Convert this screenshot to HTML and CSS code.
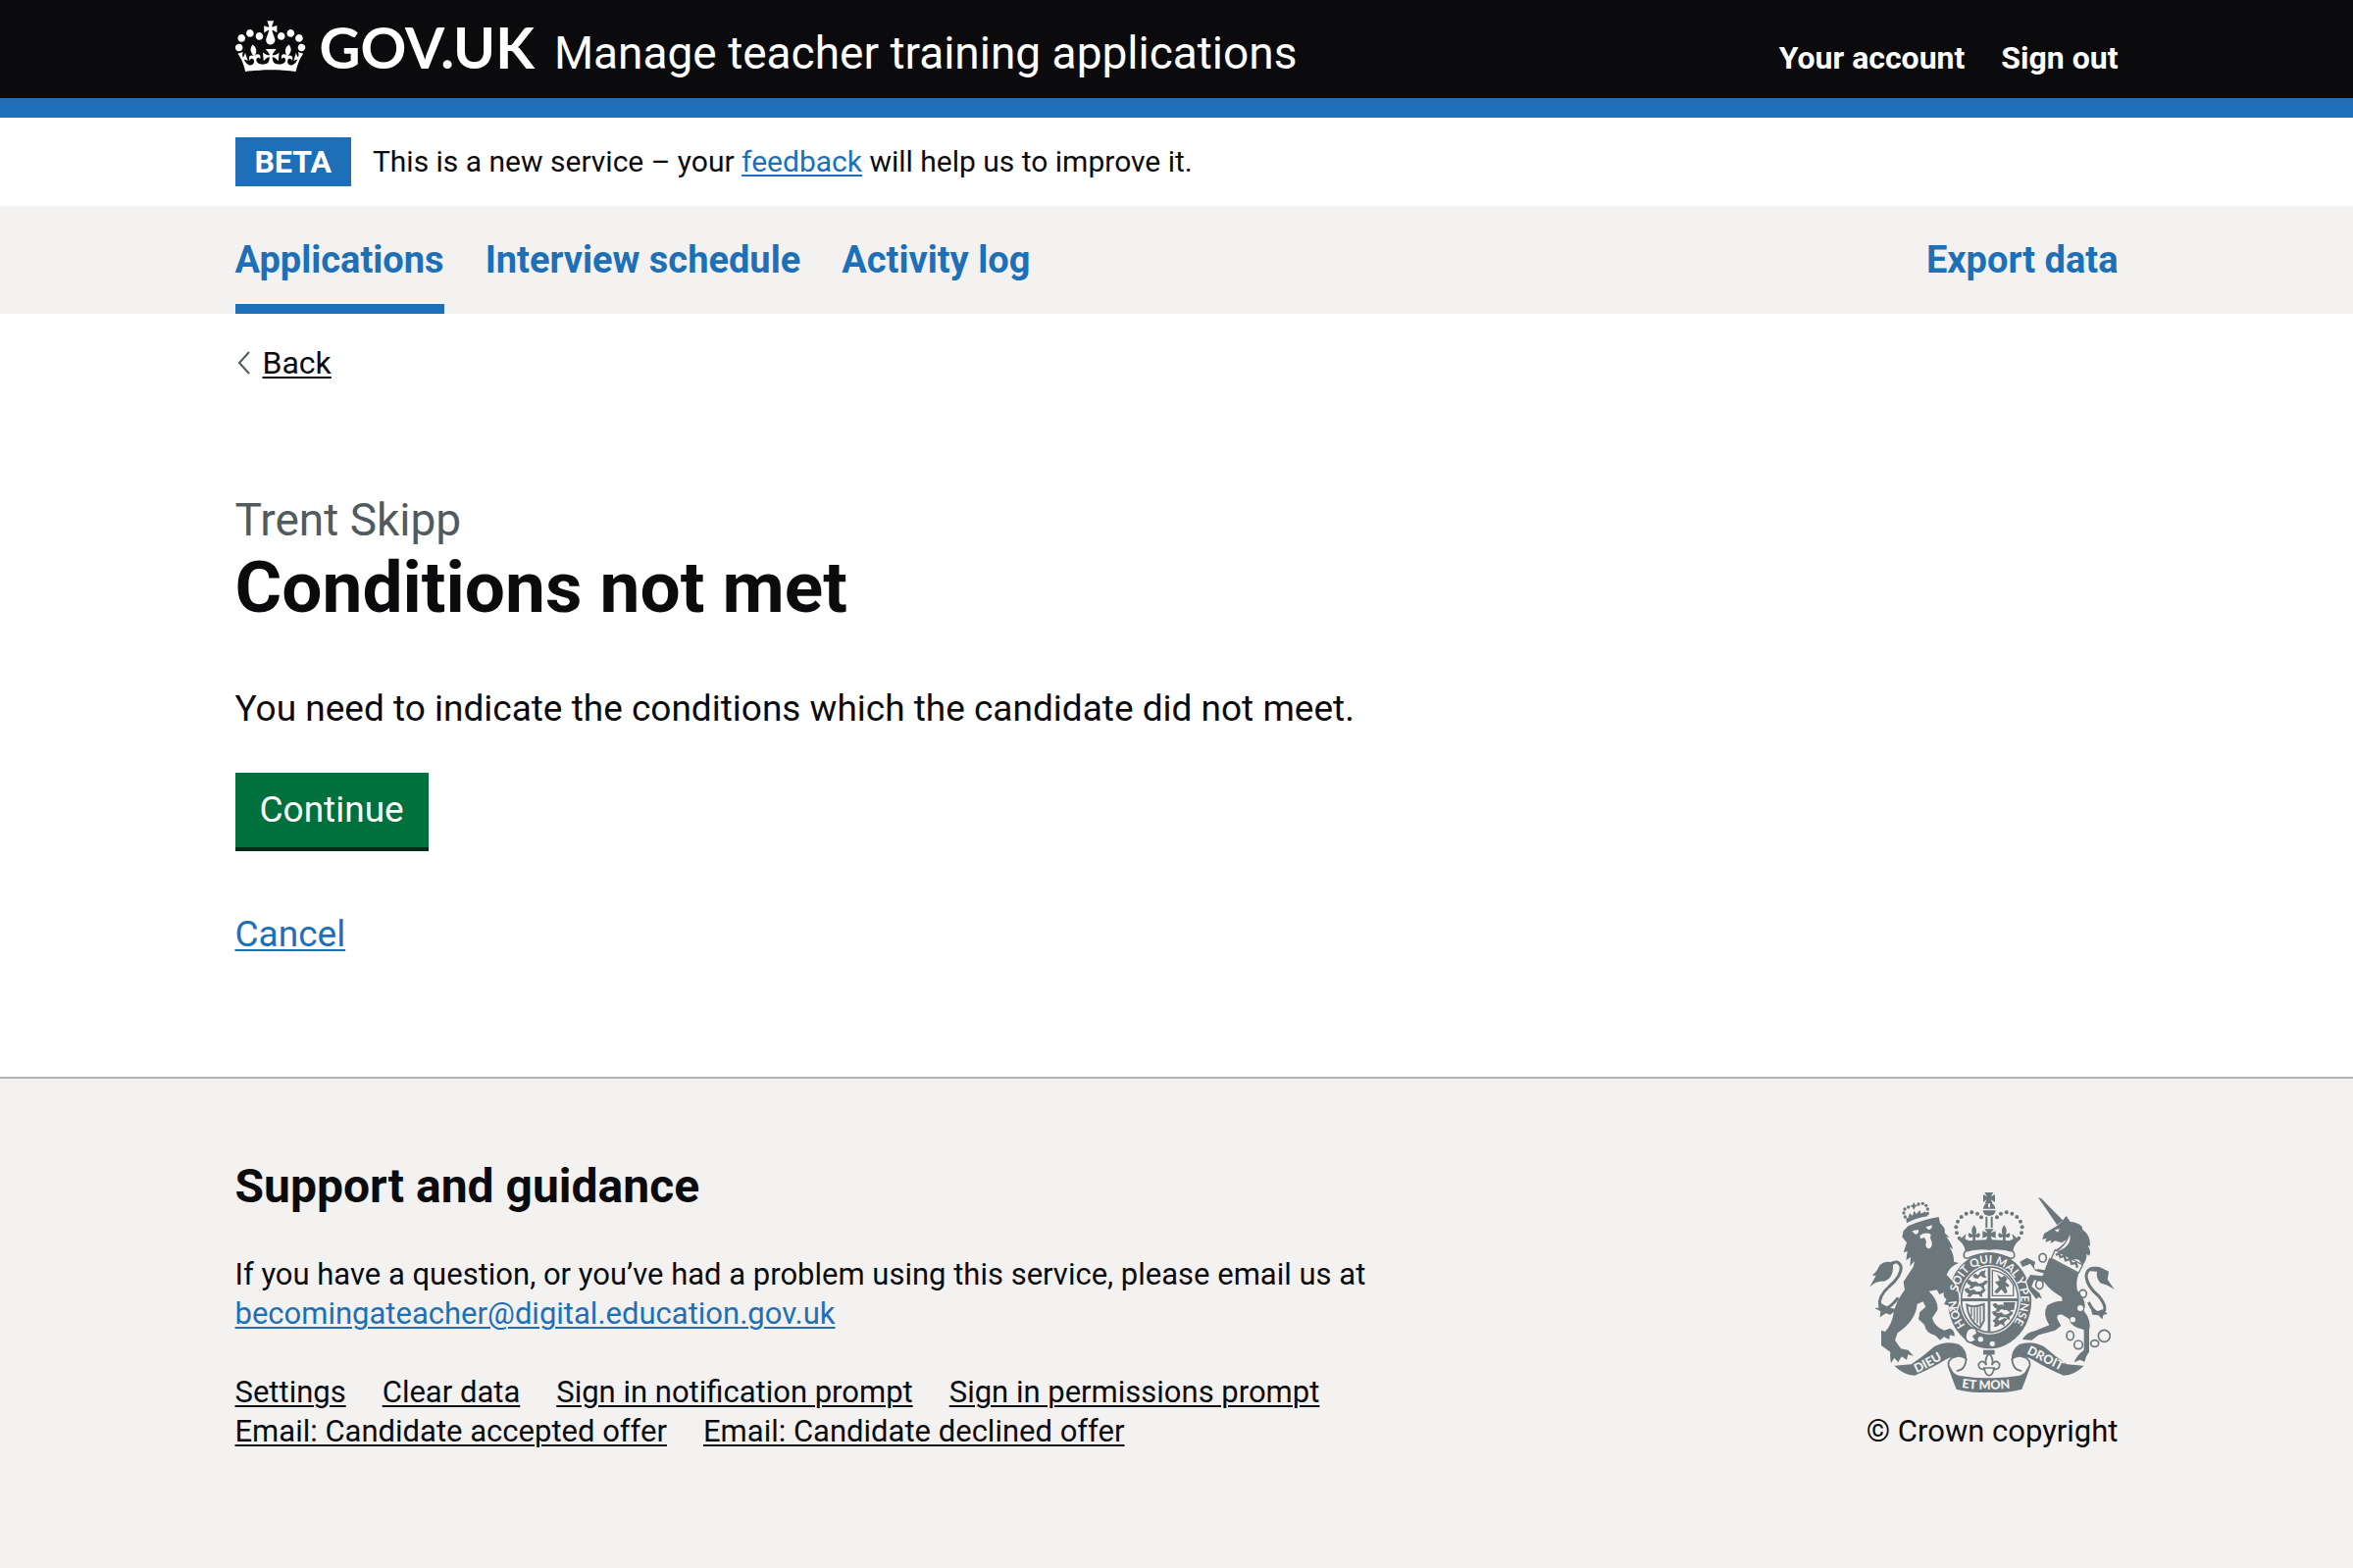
FILE: index.html
```html
<!DOCTYPE html>
<html lang="en">
<head>
  <meta charset="utf-8">
  <meta name="viewport" content="width=device-width, initial-scale=1">
  <title>Conditions not met - Manage teacher training applications - GOV.UK</title>
  <link rel="stylesheet" href="styles.css">
</head>
<body>
  <header class="header">
    <div class="container header-row">
      <a class="logo" href="#">
        <svg class="logo-crown" viewBox="0 4 36 26" aria-hidden="true">
          <path fill="currentColor" d="M6.7 12.2c1 .4 2.1-.1 2.5-1s-.1-2.1-1-2.5c-1-.4-2.1.1-2.5 1-.4 1 0 2.1 1 2.5m-4.3 2.5c1 .4 2.1-.1 2.5-1s-.1-2.1-1-2.5c-1-.4-2.1.1-2.5 1-.5 1 0 2.1 1 2.5m-1.3 4.8c1 .4 2.1-.1 2.5-1 .4-1-.1-2.1-1-2.5-1-.4-2.1.1-2.5 1-.4 1 0 2.1 1 2.5m10.4-5.8c1 .4 2.1-.1 2.5-1s-.1-2.1-1-2.5c-1-.4-2.1.1-2.5 1s0 2.1 1 2.5m17.4-1.5c-1 .4-2.1-.1-2.5-1s.1-2.1 1-2.5c1-.4 2.1.1 2.5 1 .5 1 0 2.1-1 2.5m4.3 2.5c-1 .4-2.1-.1-2.5-1s.1-2.1 1-2.5c1-.4 2.1.1 2.5 1 .5 1 0 2.1-1 2.5m1.3 4.8c-1 .4-2.1-.1-2.5-1-.4-1 .1-2.1 1-2.5 1-.4 2.1.1 2.5 1 .4 1 0 2.1-1 2.5m-10.4-5.8c-1 .4-2.1-.1-2.5-1s.1-2.1 1-2.5c1-.4 2.1.1 2.5 1s0 2.1-1 2.5m-5.3-4.9 2.4 1.3V6.5l-2.4.8c-.1-.1-.1-.2-.2-.2s1-3 1-3h-3.4l1 3c-.1.1-.2.1-.2.2-.1.1-2.4-.7-2.4-.7v3.5L17 8.8c-.1.1 0 .2.1.3l-1.4 4.2c-.1.2-.1.4-.1.7 0 1.1.8 2.1 1.9 2.2h.8c1.1-.2 1.9-1.1 1.9-2.2 0-.2 0-.5-.1-.7l-1.4-4.2c.2-.1.3-.2.3-.3m-1 20.3c4.6 0 8.9.3 12.8.9 1.1-4.6 2.4-7.2 3.8-9.1l-2.6-.9c.3 1.3.3 1.9 0 2.8-.4-.4-.8-1.2-1.1-2.4l-1.2 4.2c.8-.5 1.4-.9 2-.9-1.2 2.6-2.7 3.2-3.6 3-1.2-.2-1.7-1.3-1.5-2.2.3-1.3 1.6-1.6 2.2-.1 1.2-2.4-.8-3.1-2.1-2.4 1.9-1.9 2.2-3.6.6-5.7-2.2 1.7-2.2 3.3-1.2 5.6-1.3-1.5-3.3-.7-2.5 1.7.9-1.4 2.1-.5 2 .8-.2 1.2-1.7 2.1-3.7 1.9-2.8-.2-3-2.2-3-3.7.7-.1 1.9.5 3 2l.4-4.4c-1.1 1.2-2.3 1.4-3.5 1.4.4-1.2 2.1-3.1 2.1-3.1h-5.5s1.8 2 2.1 3.1c-1.1 0-2.3-.3-3.5-1.4l.4 4.4c1.1-1.5 2.3-2.1 3-2-.1 1.6-.2 3.5-3 3.7-1.9.2-3.5-.7-3.7-1.9-.2-1.3 1-2.2 1.9-.8.7-2.4-1.3-3.1-2.6-1.7 1-2.3 1-4-1.2-5.6-1.6 2.1-1.3 3.8.6 5.7-1.3-.7-3.2 0-2.1 2.4.6-1.5 1.9-1.1 2.2.1.2.9-.3 1.9-1.5 2.2-.9.2-2.5-.5-3.6-3 .7 0 1.3.4 2 .9L5 20.4c-.3 1.2-.7 1.9-1.2 2.4-.3-.8-.2-1.5 0-2.8l-2.6.9C2.7 22.8 4 25.4 5.1 30c3.8-.5 8.2-.9 12.7-.9"/>
        </svg>
        <span class="logo-text">GOV.UK</span>
      </a>
      <a class="service-name" href="#">Manage teacher training applications</a>
      <nav class="account-nav" aria-label="Account">
        <a href="#">Your account</a>
        <a href="#">Sign out</a>
      </nav>
    </div>
  </header>

  <div class="container phase-banner">
    <strong class="tag">BETA</strong>
    <span>This is a new service – your <a class="link" href="#">feedback</a> will help us to improve it.</span>
  </div>

  <nav class="primary-nav" aria-label="Primary">
    <div class="container primary-nav-row">
      <a class="nav-link nav-link-current" href="#" aria-current="page">Applications</a>
      <a class="nav-link" href="#">Interview schedule</a>
      <a class="nav-link" href="#">Activity log</a>
      <a class="nav-link nav-link-end" href="#">Export data</a>
    </div>
  </nav>

  <div class="container">
    <a class="back-link" href="#">
      <svg class="back-icon" viewBox="0 0 14 24" aria-hidden="true"><path d="M12 1 2 12l10 11" fill="none" stroke="currentColor" stroke-width="2"/></svg>
      <span class="back-text">Back</span>
    </a>
    <main class="main">
      <h1 class="title"><span class="caption">Trent Skipp</span>Conditions not met</h1>
      <p class="body">You need to indicate the conditions which the candidate did not meet.</p>
      <button class="button" type="button">Continue</button>
      <p class="body"><a class="link" href="#">Cancel</a></p>
    </main>
  </div>

  <footer class="footer">
    <div class="container footer-row">
      <div class="footer-content">
        <h2 class="footer-title">Support and guidance</h2>
        <p class="footer-text">If you have a question, or you’ve had a problem using this service, please email us at <a class="link" href="#">becomingateacher@digital.education.gov.uk</a></p>
        <ul class="footer-links">
          <li><a href="#">Settings</a></li>
          <li><a href="#">Clear data</a></li>
          <li><a href="#">Sign in notification prompt</a></li>
          <li><a href="#">Sign in permissions prompt</a></li>
          <li><a href="#">Email: Candidate accepted offer</a></li>
          <li><a href="#">Email: Candidate declined offer</a></li>
        </ul>
      </div>
      <a class="copyright" href="#">
        <svg class="crest" viewBox="72 78 750 612" aria-hidden="true">
          <defs>
            <path id="garter" d="M366 484A98 112 0 1 1 468 513"/>
            <path id="dieu" d="M216 630Q262 610 330 566"/>
            <path id="mon" d="M354 675Q438 687 540 672"/>
            <path id="droit" d="M552 570Q612 600 690 640"/>
            <g id="beast">
              <path d="M0 4 10 0 18 7 30 5 38 12 50 10 58 2 66 4 62 12 54 18 56 28 48 26 44 20 26 20 18 28 8 26 14 18 6 14Z"/>
            </g>
            <g id="side">
              <g>
                <circle cx="347" cy="218" r="6"/><circle cx="339" cy="202" r="6"/><circle cx="337" cy="184" r="6"/><circle cx="342" cy="167" r="6"/><circle cx="353" cy="153" r="6"/><circle cx="368" cy="143" r="6"/><circle cx="385" cy="139" r="6"/><circle cx="402" cy="143" r="6"/><circle cx="414" cy="154" r="6"/>
                <path d="M392 178Q404 193 396 207L408 202Q414 212 404 217L396 214V226H388V214L380 217Q370 212 376 202L388 207Q380 193 392 178Z"/>
                <path d="M346 224 368 204 364 220 376 226 439 222V254Q398 250 364 261Q366 240 346 224Z"/>
              </g>
              <path d="M364 258Q354 282 374 279Q402 266 438 264" fill="none" stroke="currentColor" stroke-width="5"/>
              <path d="M148 608 200 604Q236 580 270 550Q308 530 346 543Q370 558 370 592Q352 576 334 584Q322 580 304 590Q262 616 210 638Q176 636 148 608Z"/>
              <path d="M368 586Q366 622 338 624M334 580Q306 592 316 612Q322 622 328 634" fill="none" stroke="currentColor" stroke-width="5"/>
              <path d="M310 605Q326 632 344 638Q390 646 439 646V690Q380 692 338 680Q326 650 310 605Z"/>
            </g>
          </defs>
          <g fill="currentColor">
            <!-- royal crown -->
            <path d="M424 78H451L443 91 456 84V108L443 100 449 112H425L431 100 420 108V84L432 91ZM420 128Q421 112 435 111V124H441V111Q455 112 457 128ZM419 133H458Q458 148 438 150Q419 148 419 133ZM427 152H433V186H427ZM443 152H449V186H443ZM424 190H452L443 202 458 196V218L443 212 448 226H428L433 212 418 218V196L433 202Z"/>
            <use href="#side"/>
            <use href="#side" transform="matrix(-1 0 0 1 876 0)"/>
            <!-- garter and shield -->
            <path fill-rule="evenodd" d="M440 262A128 147 0 1 1 439 262ZM440 300A93 106 0 1 0 441 300Z"/>
            <ellipse cx="440" cy="406" rx="87" ry="100" fill="none" stroke="currentColor" stroke-width="5"/>
            <path d="M434 306H442V506H434ZM354 402H526V411H354Z"/>
            <path d="M448 316Q490 322 512 360V394H448Z" fill="none" stroke="currentColor" stroke-width="4"/>
            <path d="M462 328 476 338 484 332 494 342 488 352 500 362 496 368 488 364 494 384 486 388 476 374 462 388 454 382 468 366 456 352 470 348Z"/>
            <use href="#beast" x="368" y="345"/><use href="#beast" x="362" y="370"/>
            <path d="M388 332 396 326 404 332 412 320 428 316 424 328 430 340 420 338 412 332 404 342 392 340Z"/>
            <use href="#beast" x="448" y="416"/><use href="#beast" x="446" y="440"/>
            <path d="M448 470 458 464 470 470 486 462 494 466 484 476 486 488 474 480 462 488 452 490 456 478Z"/>
            <path d="M482 414H518L514 438H482Z"/>
            <path d="M370 422Q390 432 422 420V470L410 492Q374 470 370 422Z" fill="none" stroke="currentColor" stroke-width="6"/>
            <path d="M384 430V458M393 430V470M402 429V478M411 428V484" fill="none" stroke="currentColor" stroke-width="4"/>
            <!-- lion -->
            <path class="crest-edge" d="M190 181Q238 160 284 153L288 172Q306 188 302 202L317 216 307 214Q324 236 327 252L317 245Q332 270 330 290L345 294Q318 304 308 330L328 352Q348 380 346 412L338 440 328 430 320 438 314 424 300 420 308 404Q296 398 300 384L286 390 278 376 254 380Q284 410 280 438L264 462Q270 488 300 500L318 494Q334 500 332 518L318 514 316 528 300 520 288 530 274 516Q244 508 240 482L222 466 226 444 244 428 236 412 218 420Q214 470 158 508L150 530 168 556 190 560 207 578 190 574 186 590 170 580 160 598 148 584 138 600Q134 580 136 566L108 546V500L120 504Q142 480 146 446Q154 410 180 376L176 352 190 330 206 306 210 288 202 296 196 304 198 276 184 286 188 258 176 262 186 232 172 214 176 196Z"/>
            <path d="M186 172Q214 156 250 151L248 139Q212 144 184 158Z"/>
            <path d="M190 154 196 142 204 150 208 134 216 144 226 132 230 144 242 136 244 146M207 108 212 116 220 117 212 122 208 132 204 124 196 120 204 116Z"/>
            <g><circle cx="181" cy="153" r="5"/><circle cx="177" cy="141" r="5"/><circle cx="180" cy="129" r="5"/><circle cx="191" cy="123" r="5"/><circle cx="222" cy="114" r="5"/><circle cx="235" cy="112" r="5"/><circle cx="245" cy="118" r="5"/><circle cx="250" cy="129" r="5"/><circle cx="250" cy="142" r="5"/></g>
            <path d="M150 296Q124 282 104 300L94 318 80 332 92 332 72 368Q92 348 116 350Q146 342 144 300Z"/>
            <path d="M134 298Q160 280 169 306Q170 334 132 366Q98 396 104 426Q120 450 160 400" fill="none" stroke="currentColor" stroke-width="9"/>
            <path d="M98 412 104 430 88 432 106 442 104 460 122 448 136 452 156 436 130 430Z"/>
            <!-- unicorn -->
            <path d="M588 93 598 97 663 163 646 178ZM646 180 662 164 674 150 686 168Q706 168 722 182L724 192Q748 208 747 242L740 240Q752 262 744 272L736 266Q738 286 724 300L712 284 700 282 690 290 676 272 660 268 648 254 636 256Q660 246 676 222L660 232 640 226 626 234 628 224 610 230 614 218 601 222 606 204Z"/>
            <path class="crest-edge" d="M622 278 712 326Q702 352 708 378Q740 412 728 440Q752 470 744 500V566Q736 574 730 596L716 590 698 598Q704 578 728 560V498Q688 490 682 464L662 452Q640 450 648 468L658 486 640 500 590 514 568 530 540 528Q552 506 578 502L622 484Q600 450 616 424Q634 410 662 410L660 398Q626 380 606 352L576 346 568 366 592 386 600 404 590 398 582 404 560 376 552 350 564 330 600 334 606 326 580 318 564 296 540 306 532 290 554 278 578 290 586 312 608 316Z"/>
            <path d="M738 318Q756 300 780 308L804 320 800 344 822 376Q798 358 780 356Q764 342 768 320Z"/>
            <path d="M776 312Q736 302 735 336Q738 366 774 396Q802 432 786 446Q762 456 742 414" fill="none" stroke="currentColor" stroke-width="9"/>
            <path d="M748 430 768 442 790 434 796 420 790 440 800 450 788 452 784 466 772 454 754 452Z"/>
            <!-- pendant -->
            <path d="M420 560H455V574H420Z"/>
            <path d="M438 570Q454 588 446 606Q458 586 470 602Q472 620 452 620Q448 638 438 638Q428 638 424 620Q404 620 406 602Q418 586 430 606Q422 588 438 570ZM420 615H456" fill="none" stroke="currentColor" stroke-width="5"/>
          </g>
          <!-- chain -->
          <g fill="none" stroke="currentColor" stroke-width="5">
            <ellipse cx="602" cy="278" rx="11" ry="13"/><ellipse cx="725" cy="388" rx="11" ry="12"/><ellipse cx="686" cy="516" rx="11" ry="14"/><circle cx="711" cy="544" r="13"/><ellipse cx="761" cy="540" rx="12" ry="10"/><circle cx="790" cy="517" r="18"/><ellipse cx="592" cy="360" rx="11" ry="14"/>
          </g>
          <g class="crest-light">
            <ellipse cx="583" cy="304" rx="7" ry="10"/><circle cx="717" cy="432" r="9"/><circle cx="694" cy="467" r="8"/>
            <path d="M202 196 222 192Q224 206 212 206ZM244 184 264 178Q264 192 252 192ZM226 210Q244 198 260 206L258 218Q270 240 256 250Q240 250 246 228L240 216 228 220Z"/>
            <path d="M684 206Q694 240 648 258Q680 232 684 206ZM638 192 654 190 648 200Z"/>
            <path d="M640 254 724 300 712 324 628 280Z" stroke="currentColor" stroke-width="4"/>
            <circle cx="412" cy="527" r="8"/><circle cx="448" cy="541" r="8"/>
            <path d="M372 498Q384 488 398 496L402 510 390 518 398 530Q380 544 368 530Q362 514 372 498Z" stroke="currentColor" stroke-width="5"/>
          </g>
          <path d="M642 270 652 264 656 276 668 272 672 286 686 282 690 296 704 294 708 308" fill="none" stroke="currentColor" stroke-width="7"/>
          <g class="crest-motto">
            <text><textPath href="#garter">HON&nbsp;&nbsp; SOIT QUI MAL Y PENSE</textPath></text>
            <text class="crest-scroll"><textPath href="#dieu">DIEU</textPath></text>
            <text class="crest-scroll"><textPath href="#mon">ET MON</textPath></text>
            <text class="crest-scroll"><textPath href="#droit">DROIT</textPath></text>
          </g>
        </svg>
        <span>© Crown copyright</span>
      </a>
    </div>
  </footer>
</body>
</html>
```
FILE: styles.css
```css
:root {
  --black: #0b0b0d;
  --blue: #1d70b8;
  --grey: #f3f2f1;
  --green: #00703c;
}

* {
  box-sizing: border-box;
}

html {
  background: var(--grey);
}

body {
  margin: 0;
  background: #fff;
  color: var(--black);
  font-family: Roboto, "Liberation Sans", sans-serif;
  font-size: 37px;
  line-height: 50px;
}

a {
  color: inherit;
  text-decoration-thickness: 2px;
  text-underline-offset: 3px;
}

.container {
  max-width: 1920px;
  margin: 0 auto;
}

.link {
  color: var(--blue);
}

/* Header */

.header {
  background: var(--black);
  border-bottom: 20px solid var(--blue);
  color: #fff;
}

.header a {
  text-decoration: none;
}

.header-row {
  display: flex;
  align-items: baseline;
  padding-top: 18px;
  padding-bottom: 16px;
}

.logo {
  display: flex;
  align-items: baseline;
  gap: 14px;
  margin-right: 20px;
}

.logo-crown {
  align-self: flex-start;
  width: 72px;
  height: 52px;
  margin-top: 3px;
}

.logo-text {
  font: bold 58px/60px Lato, sans-serif;
}

.service-name {
  font-size: 46px;
}

.account-nav {
  display: flex;
  gap: 37px;
  margin-left: auto;
  font-size: 32px;
  font-weight: bold;
}

/* Phase banner */

.phase-banner {
  display: flex;
  gap: 22px;
  padding: 20px 0;
  font-size: 30px;
}

.tag {
  padding: 0 20px;
  background: var(--blue);
  color: #fff;
  font-size: 32px;
}

/* Primary navigation */

.primary-nav {
  background: var(--grey);
}

.primary-nav-row {
  display: flex;
  gap: 42px;
}

.nav-link {
  padding: 30px 0 20px;
  border-bottom: 10px solid transparent;
  color: var(--blue);
  font-size: 38px;
  font-weight: bold;
  text-decoration: none;
}

.nav-link-current {
  border-color: var(--blue);
}

.nav-link-end {
  margin-left: auto;
}

/* Main content */

.back-link {
  display: inline-flex;
  align-items: center;
  gap: 12px;
  margin-top: 30px;
  padding-left: 2px;
  font-size: 32px;
  line-height: 40px;
  text-decoration: none;
  vertical-align: top;
}

.back-icon {
  width: 14px;
  height: 24px;
  color: #505a5f;
}

.back-text {
  text-decoration: underline 2px;
}

.main {
  padding: 110px 0 120px;
}

.title {
  margin: 0 0 60px;
  font-size: 73px;
  line-height: 78px;
}

.caption {
  display: block;
  color: #505a5f;
  font-size: 46px;
  font-weight: normal;
  line-height: 60px;
}

.body {
  margin: 0;
}

.button {
  display: block;
  margin: 40px 0 64px;
  padding: 13px 25px;
  border: 0;
  background: var(--green);
  box-shadow: 0 4px 0 #002d18;
  color: #fff;
  font: inherit;
}

/* Footer */

.footer {
  padding: 80px 0;
  border-top: 2px solid #b1b4b6;
  background: var(--grey);
  font-size: 31px;
  line-height: 40px;
}

.footer-row {
  display: flex;
  align-items: flex-end;
  justify-content: space-between;
}

.footer-content {
  width: 66%;
}

.footer-title {
  margin: 0 0 40px;
  font-size: 48px;
  line-height: 60px;
}

.footer-text {
  margin: 0 0 40px;
}

.footer-links {
  display: flex;
  flex-wrap: wrap;
  gap: 0 37px;
  margin: 0;
  padding: 0;
  list-style: none;
}

.copyright {
  display: flex;
  flex-direction: column;
  align-items: center;
  gap: 20px;
  text-decoration: none;
}

.crest {
  width: 250px;
  height: 204px;
  color: #6b777b;
}

.crest-light {
  fill: var(--grey);
}

.crest-edge {
  paint-order: stroke;
  stroke: var(--grey);
  stroke-width: 8px;
}

.crest-motto {
  fill: var(--grey);
  font: bold 35px Lato, sans-serif;
}

.crest-scroll {
  font-size: 38px;
  font-weight: 900;
}
```
